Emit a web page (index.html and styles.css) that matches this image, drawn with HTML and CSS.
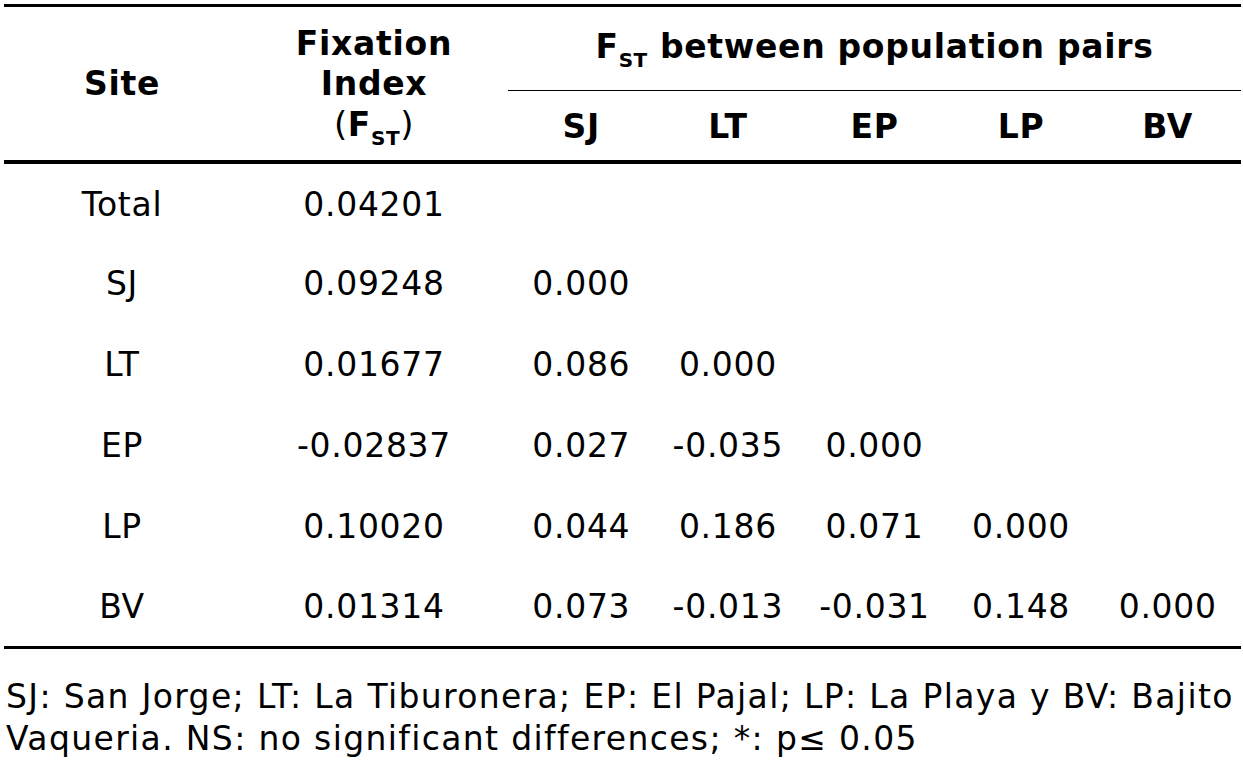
FILE: index.html
```html
<!DOCTYPE html>
<html>
<head>
<meta charset="utf-8">
<link rel="stylesheet" href="styles.css">
</head>
<body>
<div class="page">
<table class="fst">
  <colgroup>
    <col class="c-site"><col class="c-fix"><col class="c-pair"><col class="c-pair"><col class="c-pair"><col class="c-pair"><col class="c-pair">
  </colgroup>
  <thead>
    <tr class="h1">
      <th rowspan="2" class="site-h">Site</th>
      <th rowspan="2" class="fix-h">Fixation<br>Index<br><span class="paren">(</span>F<sub>ST</sub><span class="paren">)</span></th>
      <th colspan="5" class="group-h">F<sub>ST</sub> between population pairs</th>
    </tr>
    <tr class="h2">
      <th>SJ</th><th>LT</th><th>EP</th><th>LP</th><th>BV</th>
    </tr>
  </thead>
  <tbody>
    <tr><td>Total</td><td>0.04201</td><td></td><td></td><td></td><td></td><td></td></tr>
    <tr><td>SJ</td><td>0.09248</td><td>0.000</td><td></td><td></td><td></td><td></td></tr>
    <tr><td>LT</td><td>0.01677</td><td>0.086</td><td>0.000</td><td></td><td></td><td></td></tr>
    <tr><td>EP</td><td>-0.02837</td><td>0.027</td><td>-0.035</td><td>0.000</td><td></td><td></td></tr>
    <tr><td>LP</td><td>0.10020</td><td>0.044</td><td>0.186</td><td>0.071</td><td>0.000</td><td></td></tr>
    <tr class="last"><td>BV</td><td>0.01314</td><td>0.073</td><td>-0.013</td><td>-0.031</td><td>0.148</td><td>0.000</td></tr>
  </tbody>
</table>
<p class="note">SJ: San Jorge; LT: La Tiburonera; EP: El Pajal; LP: La Playa y BV: Bajito Vaqueria. NS: no significant differences; *: p≤ 0.05</p>
</div>
</body>
</html>
```
FILE: styles.css
```css
html, body {
  margin: 0;
  padding: 0;
  background: #fff;
}
body {
  font-family: "DejaVu Sans", Verdana, sans-serif;
  color: #000;
  letter-spacing: 0.7px;
}
.page {
  padding: 4px 0 0 4px;
}
.fst {
  width: 1237px;
  border-collapse: collapse;
  table-layout: fixed;
  border-top: 3px solid #000;
  border-bottom: 3px solid #000;
  font-size: 33px;
}
.c-site { width: 236px; }
.c-fix { width: 268px; }
.c-pair { width: 146.6px; }
th, td {
  padding: 0;
  text-align: center;
  vertical-align: middle;
  white-space: nowrap;
}
th {
  font-weight: bold;
}
sub {
  font-size: 20px;
  vertical-align: -9px;
  line-height: 0;
  letter-spacing: 0.5px;
}
.paren {
  font-weight: normal;
  font-size: 34px;
}
.h1 { height: 85px; }
.h2 { height: 71px; }
.h2 th { padding-top: 3px; }
.fix-h {
  line-height: 40px;
  padding-top: 2px;
}
.group-h {
  border-bottom: 1px solid #000;
  padding-bottom: 5px;
}
thead {
  border-bottom: 4px solid #000;
}
tbody tr { height: 81px; }
tbody tr:first-child td { padding-top: 2px; }
tbody tr.last { height: 81px; }
.note {
  margin: 27px 0 0 2px;
  font-size: 33px;
  line-height: 42px;
  letter-spacing: 1.35px;
}
```
